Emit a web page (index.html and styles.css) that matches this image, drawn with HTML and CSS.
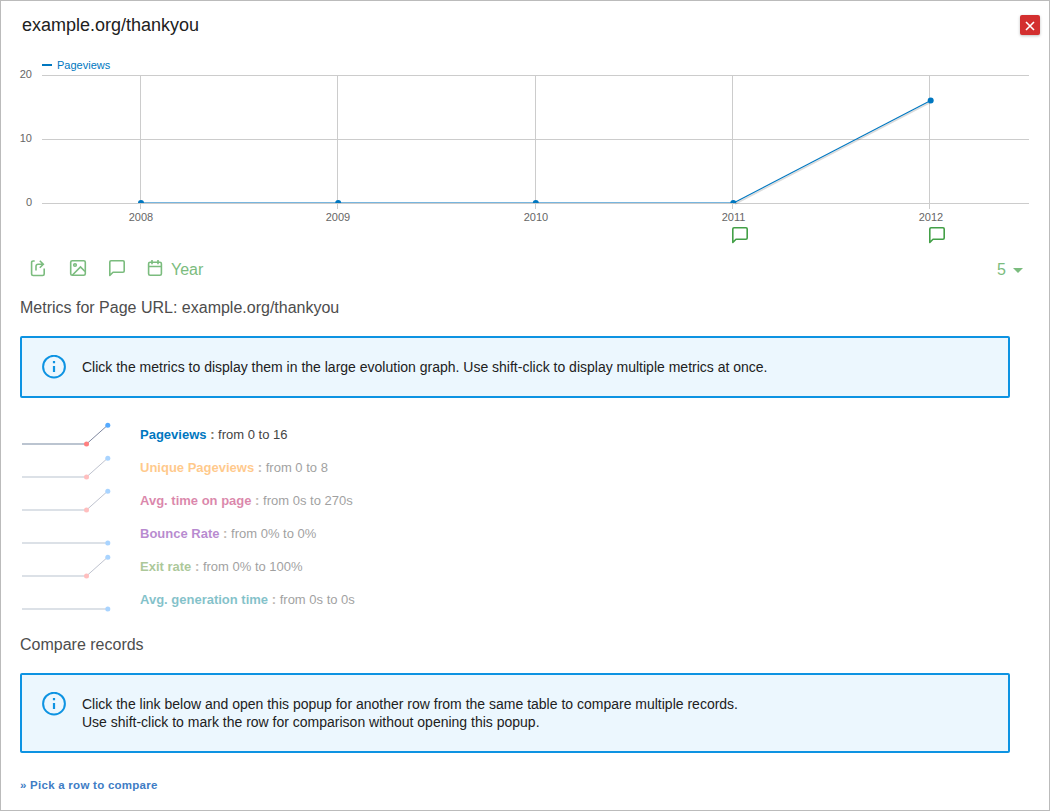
FILE: index.html
```html
<!DOCTYPE html>
<html lang="en">
<head>
<meta charset="utf-8">
<title>Row evolution</title>
<link rel="stylesheet" href="styles.css">
</head>
<body>
<svg class="defs" width="0" height="0">
  <symbol id="comment" viewBox="0 0 16 17"><path d="M.8 15.500V2Q.8 .8 2 .8H14Q15.200 .8 15.200 2V11Q15.200 12.200 14 12.200H4Z" fill="none" stroke="currentColor" stroke-width="1.6" stroke-linejoin="round"/></symbol>
  <symbol id="info" viewBox="0 0 24 24"><circle cx="12" cy="11.700" r="10.900" fill="none" stroke="currentColor" stroke-width="2"/><path d="M12 11v6M12 6v2.200" stroke="currentColor" stroke-width="2.2"/></symbol>
  <symbol id="spark-rise" viewBox="0 0 100 33"><path d="M2 26H66.500" stroke="#bbc4d0" stroke-width="2"/><path d="M66.500 26L87.800 7" stroke="#8088a0" stroke-width="1"/><circle cx="66.500" cy="26" r="2.500" fill="#ff7f7f"/><circle cx="87.800" cy="7.200" r="2.500" fill="#55aaff"/></symbol>
  <symbol id="spark-flat" viewBox="0 0 100 33"><path d="M2 26H87.800" stroke="#bbc4d0" stroke-width="2"/><circle cx="87.800" cy="26" r="2.500" fill="#55aaff"/></symbol>
</svg>
<main class="dialog">
  <header class="dialog-header">
    <h1 class="title">example.org/thankyou</h1>
    <button class="close" aria-label="Close"><svg width="10" height="10" viewBox="0 0 10 10"><path d="M1 1L9 9M9 1L1 9" stroke="#fff" stroke-width="1.6"/></svg></button>
  </header>
  <svg class="chart" width="1048" height="200" viewBox="1 50 1048 200">
    <g class="grid">
      <path d="M42 75.500H1029M42 139.500H1029M42 203.500H1029M140.500 75V209M337.500 75V209M535.500 75V209M732.500 75V209M929.500 75V209"/>
    </g>
    <path d="M42 65H52" stroke="#0077c0" stroke-width="2"/>
    <text class="legend" x="57" y="69">Pageviews</text>
    <g class="axis axis-y"><text x="32" y="78">20</text><text x="32" y="142">10</text><text x="32" y="206">0</text></g>
    <g class="axis axis-x"><text x="141" y="221">2008</text><text x="338" y="221">2009</text><text x="536" y="221">2010</text><text x="733.500" y="221">2011</text><text x="931" y="221">2012</text></g>
    <path d="M735 204L931 102" stroke="#000" stroke-opacity=".14" stroke-width="1.500"/>
    <path d="M141 202.500H733.500" stroke="#77b5de" stroke-width="1"/>
    <path d="M733.500 203L930.700 100.500" stroke="#0077c0" stroke-width="1.1"/>
    <g fill="#0077c0">
      <path d="M138 203a3 3 0 0 1 6 0zM335.200 203a3 3 0 0 1 6 0zM532.800 203a3 3 0 0 1 6 0zM730.300 203a3 3 0 0 1 6 0z"/>
      <circle cx="930.700" cy="100.500" r="3"/>
    </g>
    <g class="notes"><use href="#comment" x="732" y="227" width="16" height="17"/><use href="#comment" x="929" y="227" width="16" height="17"/></g>
  </svg>
  <div class="toolbar">
    <svg class="tool export" width="16" height="18" viewBox="0 0 16 18"><path d="M4.700 2H3.200Q1.600 2 1.600 3.600V14.900Q1.600 16.500 3.200 16.500H12.600Q14.200 16.500 14.200 14.900V9.500M6 11.500V7.300Q6 5.200 8.200 5.200H13M9.800 1.700L13.300 5.200L9.800 8.700"/></svg>
    <svg class="tool image" width="18" height="18" viewBox="0 0 18 18"><rect x="1.700" y="1.700" width="14.600" height="14.600" rx="1.600"/><circle cx="6" cy="6" r="1.300"/><path d="M3.500 16L11.500 8L16 12.500"/></svg>
    <svg class="tool comment" width="16" height="17"><use href="#comment"/></svg>
    <span class="period"><svg class="calendar" width="16" height="18" viewBox="0 0 16 18"><rect x="1.600" y="3.300" width="12.800" height="13" rx="1.500"/><path d="M1.600 7.500H14.400M5 1V5.200M11 1V5.200"/></svg>Year</span>
    <span class="limit">5<i class="caret"></i></span>
  </div>
  <h2 class="heading">Metrics for Page URL: example.org/thankyou</h2>
  <div class="callout">
    <svg class="info" width="24" height="24"><use href="#info"/></svg>
    <p>Click the metrics to display them in the large evolution graph. Use shift-click to display multiple metrics at once.</p>
  </div>
  <ul class="metrics">
    <li class="metric active blue"><svg class="spark"><use href="#spark-rise"/></svg><span><b>Pageviews</b> <em>:</em> from 0 to 16</span></li>
    <li class="metric orange"><svg class="spark"><use href="#spark-rise"/></svg><span><b>Unique Pageviews</b> <em>:</em> from 0 to 8</span></li>
    <li class="metric pink"><svg class="spark"><use href="#spark-rise"/></svg><span><b>Avg. time on page</b> <em>:</em> from 0s to 270s</span></li>
    <li class="metric purple"><svg class="spark"><use href="#spark-flat"/></svg><span><b>Bounce Rate</b> <em>:</em> from 0% to 0%</span></li>
    <li class="metric green"><svg class="spark"><use href="#spark-rise"/></svg><span><b>Exit rate</b> <em>:</em> from 0% to 100%</span></li>
    <li class="metric teal"><svg class="spark"><use href="#spark-flat"/></svg><span><b>Avg. generation time</b> <em>:</em> from 0s to 0s</span></li>
  </ul>
  <h2 class="heading compare">Compare records</h2>
  <div class="callout tall">
    <svg class="info" width="24" height="24"><use href="#info"/></svg>
    <p>Click the link below and open this popup for another row from the same table to compare multiple records.<br>Use shift-click to mark the row for comparison without opening this popup.</p>
  </div>
  <a class="pick">» Pick a row to compare</a>
</main>
</body>
</html>
```
FILE: styles.css
```css
* { box-sizing: border-box; }
body { margin: 0; font-family: "Liberation Sans", Arial, sans-serif; background: #fff; }
.defs { display: block; }
.dialog { width: 1050px; height: 811px; border: 1px solid #bbb; overflow: hidden; }
.dialog-header { height: 49px; display: flex; justify-content: space-between; padding: 14px 9px 0 21px; }
.title { margin: 0; font-size: 18px; font-weight: 400; line-height: 20px; color: #212121; }
.close { width: 20px; height: 20px; padding: 0; border: 0; border-radius: 2px; background: #d32f2f; display: grid; place-items: center; box-shadow: 0 1px 3px rgba(0,0,0,.25); }
.close svg { margin-top: 2px; }
.chart { display: block; }
.grid path { stroke: #ccc; stroke-width: 1; fill: none; }
.legend { font-size: 11px; fill: #0077c0; }
.axis text { font-size: 11px; fill: #666; }
.axis-y text { text-anchor: end; }
.axis-x text { text-anchor: middle; }
.notes { color: #43a047; }
.toolbar { height: 39px; display: flex; align-items: flex-start; padding: 9px 26px 0 29px; color: #7bbc7e; font-size: 16px; }
.tool, .calendar { fill: none; stroke: currentColor; stroke-width: 1.6; flex: none; }
.image { margin-left: 23px; }
.comment { margin-left: 22px; margin-top: 1px; stroke: none; }
.period { display: flex; margin-left: 22px; line-height: 22px; gap: 8px; }
.limit { display: flex; align-items: center; gap: 7px; margin-left: auto; line-height: 22px; }
.caret { border: 5px solid transparent; border-top-color: currentColor; border-bottom: 0; margin-top: 1px; }
.heading { margin: 9px 0 0 19px; font-size: 16px; font-weight: 400; line-height: 20px; color: #4d4d4d; }
.callout { width: 990px; height: 62px; margin: 18px 0 0 19px; padding: 17px 20px; border: 2px solid #0d93e2; border-radius: 2px; background: #ecf7fe; display: flex; gap: 16px; }
.tall { height: 80px; }
.info { color: #0d93e2; flex: none; }
.callout p { margin: 3px 0 0; font-size: 14px; line-height: 18px; color: #212121; }
.metrics { list-style: none; margin: 20px 0 0 19px; padding: 0; }
.metric { height: 33px; display: flex; gap: 20px; font-size: 13px; line-height: 33px; color: #444; opacity: .5; }
.active { opacity: 1; }
.spark { width: 100px; height: 33px; }
.metric em { font-style: normal; font-weight: 700; color: #7e7363; }
.blue b { color: #0077c0; }
.orange b { color: #ff9618; }
.pink b { color: #b9105b; }
.purple b { color: #7416a2; }
.green b { color: #5b9336; }
.teal b { color: #088797; }
.compare { margin-top: 19px; }
.pick { display: block; margin: 22px 0 0 19px; font-size: 11.5px; letter-spacing: .26px; font-weight: 700; line-height: 20px; color: #407dc5; }
```
